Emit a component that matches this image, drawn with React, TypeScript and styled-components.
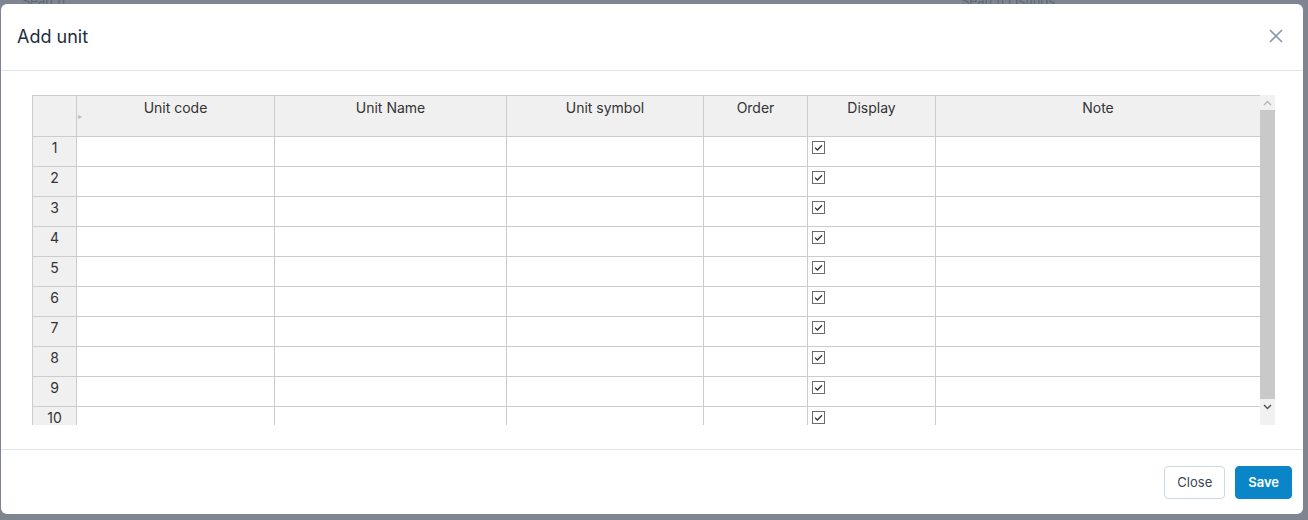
import React from 'react';
import styled, { createGlobalStyle } from 'styled-components';

const GlobalStyle = createGlobalStyle`
  html, body {
    margin: 0;
    padding: 0;
    background: #7e8591;
    font-family: Inter, "Noto Sans", "Liberation Sans", sans-serif;
  }
`;

const columns = [
  { key: 'code', title: 'Unit code', width: 198 },
  { key: 'name', title: 'Unit Name', width: 232 },
  { key: 'symbol', title: 'Unit symbol', width: 197 },
  { key: 'order', title: 'Order', width: 104 },
  { key: 'display', title: 'Display', width: 128 },
  { key: 'note', title: 'Note', width: 325 },
];

const rows = Array.from({ length: 10 }, (_, i) => i + 1);

const CheckMark = () => (
  <svg width="13" height="13" viewBox="0 0 13 13">
    <rect x="0.5" y="0.5" width="12" height="12" fill="#fff" stroke="#6b6b6b" />
    <path d="M3 6.6 L5.4 9 L10 4.2" fill="none" stroke="#333" strokeWidth="1.3" />
  </svg>
);

const App = () => {
  return (
    <>
      <GlobalStyle />
      <Backdrop>
        <BackTopBar>
          <BackText style={{ marginLeft: 22 }}>Search</BackText>
          <BackText style={{ marginLeft: 896 }}>Search Listings</BackText>
        </BackTopBar>
        <Modal>
          <Header>
            <Title>Add unit</Title>
            <CloseIcon>
              <svg width="16" height="16" viewBox="0 0 16 16">
                <path d="M2 2 L14 14 M14 2 L2 14" stroke="#8496ab" strokeWidth="1.6" fill="none" />
              </svg>
            </CloseIcon>
          </Header>
          <Body>
            <GridWrap>
              <Viewport>
                <Table>
                  <colgroup>
                    <col style={{ width: 44 }} />
                    {columns.map((c) => (
                      <col key={c.key} style={{ width: c.width }} />
                    ))}
                  </colgroup>
                  <thead>
                    <tr>
                      <Corner />
                      {columns.map((c, i) => (
                        <HeadCell key={c.key}>
                          {i === 0 && <Sorter>▸</Sorter>}
                          {c.title}
                        </HeadCell>
                      ))}
                    </tr>
                  </thead>
                  <tbody>
                    {rows.map((r) => (
                      <tr key={r}>
                        <RowHead>{r}</RowHead>
                        {columns.map((c) => (
                          <Cell key={c.key}>{c.key === 'display' && <CheckMark />}</Cell>
                        ))}
                      </tr>
                    ))}
                  </tbody>
                </Table>
              </Viewport>
              <Scrollbar>
                <ScrollArrow>
                  <svg width="9" height="6" viewBox="0 0 9 6">
                    <path d="M1 5 L4.5 1.5 L8 5" stroke="#b9b9b9" strokeWidth="1.5" fill="none" />
                  </svg>
                </ScrollArrow>
                <Thumb />
                <ScrollArrow>
                  <svg width="9" height="6" viewBox="0 0 9 6">
                    <path d="M1 1 L4.5 4.5 L8 1" stroke="#555" strokeWidth="1.5" fill="none" />
                  </svg>
                </ScrollArrow>
              </Scrollbar>
            </GridWrap>
          </Body>
          <Footer>
            <Button>Close</Button>
            <Button primary>Save</Button>
          </Footer>
        </Modal>
      </Backdrop>
    </>
  );
};

export default App;

const Backdrop = styled.div`
  position: relative;
  width: 1308px;
  height: 520px;
  overflow: hidden;
  background: #7e8591;
`;

const BackTopBar = styled.div`
  position: absolute;
  top: -9px;
  left: 0;
  display: flex;
  align-items: center;
  height: 20px;
`;

const BackText = styled.span`
  font-size: 13px;
  color: #5f6775;
`;

const Modal = styled.div`
  position: absolute;
  top: 4px;
  left: 1px;
  width: 1302px;
  height: 510px;
  background: #fff;
  border-radius: 6px;
  display: flex;
  flex-direction: column;
`;

const Header = styled.div`
  height: 67px;
  box-sizing: border-box;
  border-bottom: 1px solid #e3e6ea;
  display: flex;
  align-items: center;
  justify-content: space-between;
  padding: 0 18px 2px 16px;
`;

const Title = styled.h4`
  margin: 0;
  font-size: 18px;
  font-weight: 400;
  color: #232d3b;
`;

const CloseIcon = styled.div`
  display: flex;
  align-items: center;
  justify-content: center;
  width: 18px;
  height: 18px;
  cursor: pointer;
`;

const Body = styled.div`
  height: 379px;
  box-sizing: border-box;
  padding: 24px 27px 0 31px;
  border-bottom: 1px solid #e3e6ea;
`;

const GridWrap = styled.div`
  display: flex;
  height: 330px;
`;

const Viewport = styled.div`
  width: 1228px;
  height: 330px;
  overflow: hidden;
`;

const Table = styled.table`
  border-collapse: collapse;
  table-layout: fixed;
  width: 1228px;
  font-size: 14px;
  color: #333;

  td,
  th {
    border: 1px solid #ccc;
    box-sizing: border-box;
  }
`;

const Corner = styled.th`
  background: #f0f0f0;
  height: 41px;
`;

const HeadCell = styled.th`
  position: relative;
  background: #f0f0f0;
  height: 41px;
  font-weight: 400;
  vertical-align: top;
  padding: 1px 4px 0;
  line-height: 22px;
`;

const Sorter = styled.span`
  position: absolute;
  left: 1px;
  top: 9px;
  font-size: 8px;
  color: #bbb;
`;

const RowHead = styled.td`
  background: #f0f0f0;
  height: 30px;
  text-align: center;
  vertical-align: top;
  line-height: 22px;
  padding: 0;
`;

const Cell = styled.td`
  height: 30px;
  vertical-align: top;
  padding: 4px 4px 0;
  line-height: 13px;

  svg {
    display: block;
  }
`;

const Scrollbar = styled.div`
  width: 15px;
  height: 330px;
  background: #f1f1f1;
  display: flex;
  flex-direction: column;
`;

const ScrollArrow = styled.div`
  height: 15px;
  display: flex;
  align-items: center;
  justify-content: center;
`;

const Thumb = styled.div`
  height: 289px;
  background: #c9c9c9;
`;

const Footer = styled.div`
  flex: 1;
  display: flex;
  align-items: center;
  justify-content: flex-end;
  gap: 10px;
  padding: 0 11px 0 0;
`;

const Button = styled.button<{ primary?: boolean }>`
  height: 33px;
  box-sizing: border-box;
  padding: 0 12px;
  border-radius: 4px;
  font-family: Inter, "Liberation Sans", sans-serif;
  font-size: 13px;
  font-weight: ${(p) => (p.primary ? 600 : 400)};
  border: 1px solid ${(p) => (p.primary ? '#0a86c8' : '#cdd7e3')};
  background: ${(p) => (p.primary ? '#0a86c8' : '#fff')};
  color: ${(p) => (p.primary ? '#fff' : '#3b4554')};
  cursor: pointer;
`;
